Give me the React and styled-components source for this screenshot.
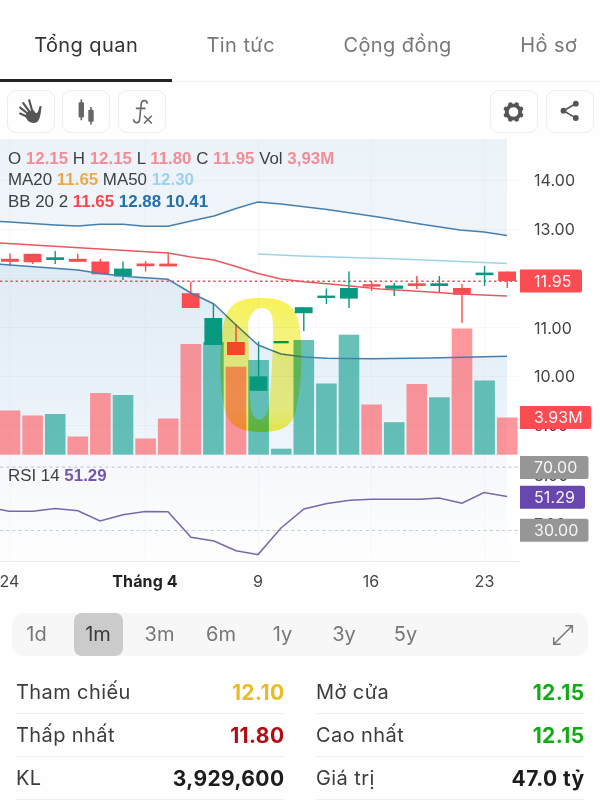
import React from "react";
import styled, { createGlobalStyle } from "styled-components";

const STEP = 22.6;
const VOLUME_BASE = 454.7;
const RED = "#fb4c52";
const GREEN = "#089981";
const UPPER_BAND =
  "0,221.5 10,222 32,223.5 55,225 78,226 100,224.3 123,224.3 145,226.3 168,226.3 191,221 214,216 236,208.5 258,202 281,204 327,209.5 380,217.3 420,224 460,230 484,232 507,235.5";
const LOWER_BAND =
  "0,264.3 78,270 100,273.5 130,276.7 168,279.3 191,293 214,304 236,325 258,345 281,354 304,357 327,358.2 371,358.8 430,358 507,356.2";

// [direction, body top, body bottom, high, low, volume top]
const candles = [
  ["down", 258.8, 261.8, 253.5, 266, 410.5],
  ["down", 253.8, 262.2, 253.8, 264, 415.5],
  ["up", 257.3, 260, 251, 264, 414],
  ["down", 258.8, 261.8, 253.8, 262, 436.5],
  ["down", 261.5, 274.3, 259, 274, 393],
  ["up", 268.6, 276.5, 261.5, 280, 395],
  ["down", 263.5, 266.2, 261, 271.5, 438.5],
  ["down", 263.6, 266.4, 252.5, 266, 418.5],
  ["down", 293.2, 308, 281.5, 308, 344],
  ["up", 318, 345, 304, 345, 342],
  ["down", 342, 355, 324, 355, 366.7],
  ["up", 376.4, 390.8, 341.5, 390.8, 360],
  ["up", 341, 343.3, 341, 343, 448.7],
  ["up", 307.2, 313.2, 307.2, 331, 340],
  ["up", 295.6, 298, 288.5, 304, 383.5],
  ["up", 288, 298.6, 271.5, 308, 334.7],
  ["down", 284.2, 286.6, 281, 291, 404.5],
  ["up", 285.5, 288.8, 283, 296, 422.2],
  ["down", 283.3, 286, 276, 289, 384],
  ["up", 283.3, 286, 276, 293, 397.3],
  ["down", 288, 294.8, 284, 323, 328.5],
  ["up", 272.6, 275.2, 266, 286, 380.5],
  ["down", 271.5, 281, 271.5, 288, 417.5],
];

const priceLabels = [
  ["14.00", 186.3],
  ["13.00", 235.2],
  ["11.00", 333.6],
  ["10.00", 382.4],
  ["9.00", 431.2],
  ["8.00", 480.5],
  ["7.00", 529.5],
];

const tags = [
  { text: "11.95", y: 269.6, width: 62, color: RED },
  { text: "3.93M", y: 406, width: 71.3, color: RED },
  { text: "70.00", y: 456, width: 68.5, color: "#969696" },
  { text: "51.29", y: 485.8, width: 65, color: "#6848b0" },
  { text: "30.00", y: 518.8, width: 68.5, color: "#969696" },
];

const tabs = ["Tổng quan", "Tin tức", "Cộng đồng", "Hồ sơ"];
const ranges = ["1d", "1m", "3m", "6m", "1y", "3y", "5y"];

const stats = [
  ["Tham chiếu", "12.10", "#e9bd20"],
  ["Mở cửa", "12.15", "#12ab15"],
  ["Thấp nhất", "11.80", "#b30d14"],
  ["Cao nhất", "12.15", "#12ab15"],
  ["KL", "3,929,600", "#1c1c1c"],
  ["Giá trị", "47.0 tỷ", "#1c1c1c"],
];

function HandIcon() {
  return (
    <svg width="28" height="28" viewBox="0 0 28 28">
      <g stroke="#555" strokeLinecap="round" fill="none">
        <path d="M15.5 15 12.2 3.2M13.5 16 6.2 6.2M12.5 18 3.2 10.6M12 20.5 3.2 16.6" strokeWidth="2.2" />
        <path d="M21.5 19 23.4 10.2" strokeWidth="2.4" />
      </g>
      <path
        fill="#555"
        d="M10.5 15 16.8 13.2C17.6 15 18.8 16.4 20 16L22 13 24 13.4C23.4 16 23.4 20.5 21.4 23.4C18.9 27 13.6 26.4 11 23.7L7.8 19.3Z"
      />
    </svg>
  );
}

function CandlesIcon() {
  return (
    <svg width="28" height="28" viewBox="0 0 28 28">
      <g fill="#666">
        <rect x="6.6" y="5.3" width="5.4" height="15.2" rx="1" />
        <rect x="16.3" y="12.8" width="5.4" height="12" rx="1" />
        <path d="M8.5 2.5h1.6v20.8H8.5zM18.2 10h1.6v17.5h-1.6z" />
      </g>
    </svg>
  );
}

function FunctionIcon() {
  return (
    <svg width="28" height="28" viewBox="0 0 28 28" fill="none" stroke="#696969" strokeWidth="1.6">
      <path d="M5.5 22.2C5.7 26.6 11.4 26.8 11.6 22.5L13.1 7.5C13.6 2.5 18.8 2.5 19.4 6.7M7.8 11.4h9.8" />
      <path d="M16 18.8l7.8 7.7M23.8 18.8 16 26.5" />
    </svg>
  );
}

function GearIcon() {
  return (
    <svg width="28" height="28" viewBox="0 0 28 28">
      <circle cx="13.5" cy="15" r="6.7" fill="none" stroke="#555" strokeWidth="3.8" />
      {[0, 1, 2, 3, 4, 5, 6, 7].map((n) => (
        <rect
          key={n}
          x="11.5"
          y="4.8"
          width="4"
          height="4"
          rx="1.2"
          fill="#555"
          transform={`rotate(${n * 45 + 22.5} 13.5 15)`}
        />
      ))}
    </svg>
  );
}

function ShareIcon() {
  return (
    <svg width="28" height="28" viewBox="0 0 28 28" fill="#555">
      <path d="M19.5 6.7 7.5 13.7 19.5 20.9" fill="none" stroke="#555" strokeWidth="1.6" />
      <circle cx="19.8" cy="6.7" r="2.9" />
      <circle cx="7.5" cy="13.7" r="2.9" />
      <circle cx="19.8" cy="21" r="2.9" />
    </svg>
  );
}

function ExpandIcon() {
  return (
    <svg width="22" height="22" viewBox="0 0 22 22" fill="none" stroke="#777" strokeWidth="1.5">
      <path d="M2 20 20 2M13.3 1.7H20.3V8.7M1.7 13.3V20.3H8.7" />
    </svg>
  );
}

function Chart() {
  return (
    <ChartSvg viewBox="0 139 600 461">
      <defs>
        <linearGradient id="upperFill" x1="0" y1="139" x2="0" y2="236" gradientUnits="userSpaceOnUse">
          <stop offset="0" stopColor="#ecf3f8" />
          <stop offset="1" stopColor="#f0f5fa" />
        </linearGradient>
        <linearGradient id="lowerFill" x1="0" y1="264" x2="0" y2="455" gradientUnits="userSpaceOnUse">
          <stop offset="0" stopColor="#dfebf4" />
          <stop offset="1" stopColor="#eff5fb" />
        </linearGradient>
        <linearGradient id="rsiFill" x1="0" y1="0" x2="0" y2="1">
          <stop offset="0" stopColor="#f4f7fb" />
          <stop offset="1" stopColor="#fefefe" />
        </linearGradient>
        <linearGradient id="highlightFill" x1="0" y1="0" x2="0" y2="1">
          <stop offset="0" stopColor="#f6ef20" stopOpacity="0.75" />
          <stop offset="0.25" stopColor="#efec20" stopOpacity="0.6" />
          <stop offset="0.8" stopColor="#efec20" stopOpacity="0.55" />
          <stop offset="1" stopColor="#f2ec10" stopOpacity="0.75" />
        </linearGradient>
      </defs>

      <polygon points={`0,139 ${UPPER_BAND} 507,139`} fill="url(#upperFill)" />
      <polygon points={`${LOWER_BAND} 507,455 0,455`} fill="url(#lowerFill)" />
      <rect x="0" y="455" width="507" height="106" fill="url(#rsiFill)" />

      <g stroke="#7890a8" strokeOpacity="0.06">
        {[10, 145.5, 258.5, 371.5, 484.5].map((x) => (
          <line key={x} x1={x} x2={x} y1="139" y2="561" />
        ))}
        {[180.5, 229.5, 278.5, 327.5, 376.5, 425.5].map((y) => (
          <line key={y} x1="0" x2="519" y1={y} y2={y} />
        ))}
      </g>

      {candles.map(([dir, , , , , top], i) => {
        const x = Math.max(0, 10 + i * STEP - 10.3);
        return (
          <rect
            key={i}
            x={x}
            y={top}
            width={i ? 20.6 : 20.3}
            height={VOLUME_BASE - top}
            fill={dir === "up" ? "#26a69a" : "#ff5258"}
            fillOpacity={dir === "up" ? 0.7 : 0.6}
          />
        );
      })}

      <line x1="0" x2="520" y1="281.2" y2="281.2" stroke="#dd555e" strokeWidth="1.4" strokeDasharray="2.4 2.8" />

      {candles.map(([dir, top, bottom, high, low], i) => {
        const x = 10 + i * STEP;
        const color = dir === "up" ? GREEN : RED;
        return (
          <g key={i} fill={color}>
            <rect x={x - 0.7} y={high} width="1.4" height={low - high} />
            <rect x={i === 12 ? x - 7.5 : x - 9} y={top} width={i === 12 ? 15 : 17.8} height={bottom - top} />
          </g>
        );
      })}

      <g fill="none" strokeWidth="1.5" strokeLinejoin="round">
        <polyline
          points="0,243 50,246 100,249 168,253 191,257 214,260 236,266.5 258,273.5 281,279 304,281.7 330,284 380,289 430,292 460,294 507,296"
          stroke="#e8595f"
        />
        <polyline points={UPPER_BAND} stroke="#457fb0" />
        <polyline points={LOWER_BAND} stroke="#457fb0" />
        <polyline points="258,254 300,256 400,259 460,261.5 507,263.5" stroke="#9fd3e6" />
      </g>

      <Highlight
        fill="url(#highlightFill)"
        fillRule="evenodd"
        d="M259 298C282 298 295 303 299 324C303 350 302 383 296 410C293 425 283 432 262 432C242 432 230 427 225 411C219 386 219 344 224 322C228 304 240 298 259 298ZM262 308C254 308 249 315 248 326C250 352 248 385 251 409C254 423 265 423 268 409C272 384 273 349 273 326C273 314 270 308 262 308Z"
      />

      <g stroke="#c9c9cf" strokeDasharray="3 3.2" strokeWidth="1.2">
        <line x1="0" x2="520" y1="467.2" y2="467.2" />
        <line x1="0" x2="520" y1="530.5" y2="530.5" />
      </g>
      <polyline
        points="0,509.5 9,511.3 33,511.3 55,508.5 78,510.8 100,521 123,514.8 145,511.5 168,511.8 191,537.3 214,541 236,550.7 258,554.6 281,528 304,509 327,503.5 350,500.3 371,499.2 420,499.2 439,498 462,503.2 484,492.5 507,496.5"
        fill="none"
        stroke="#7768ae"
        strokeWidth="1.5"
      />
      <line x1="0" x2="520" y1="561.5" y2="561.5" stroke="#ececee" />

      {priceLabels.map(([text, y]) => (
        <AxisText key={text} x="534" y={y}>
          {text}
        </AxisText>
      ))}
      {tags.map((tag) => (
        <g key={tag.text}>
          <path
            d={`M520 ${tag.y}h${tag.width - 2.5}q2.5 0 2.5 2.5v18q0 2.5 -2.5 2.5h${2.5 - tag.width}z`}
            fill={tag.color}
          />
          <AxisText x="534" y={tag.y + 17.2} $light>
            {tag.text}
          </AxisText>
        </g>
      ))}

      <AxisText x="-0.5" y="587">24</AxisText>
      <AxisText x="145" y="587" textAnchor="middle" $bold>Tháng 4</AxisText>
      <AxisText x="258" y="587" textAnchor="middle">9</AxisText>
      <AxisText x="371" y="587" textAnchor="middle">16</AxisText>
      <AxisText x="484.5" y="587" textAnchor="middle">23</AxisText>
    </ChartSvg>
  );
}

export default function App() {
  return (
    <Page>
      <GlobalStyle />
      <TabBar>
        {tabs.map((tab, i) => (
          <Tab key={tab} $active={i === 0}>
            {tab}
          </Tab>
        ))}
      </TabBar>
      <Toolbar>
        <ToolGroup>
          <ToolButton><HandIcon /></ToolButton>
          <ToolButton><CandlesIcon /></ToolButton>
          <ToolButton><FunctionIcon /></ToolButton>
        </ToolGroup>
        <ToolGroup>
          <ToolButton><GearIcon /></ToolButton>
          <ToolButton><ShareIcon /></ToolButton>
        </ToolGroup>
      </Toolbar>
      <ChartArea>
        <Chart />
        <Legend $top={8.6}>
          <div>
            O <Value $color="#f08d96">12.15</Value> H <Value $color="#f08d96">12.15</Value> L{" "}
            <Value $color="#f08d96">11.80</Value> C <Value $color="#f08d96">11.95</Value> Vol{" "}
            <Value $color="#f08d96">3,93M</Value>
          </div>
          <div>
            MA20 <Value $color="#eba94c">11.65</Value> MA50 <Value $color="#9bd2ee">12.30</Value>
          </div>
          <div>
            BB 20 2 <Value $color="#f5474f">11.65</Value> <Value $color="#2470ac">12.88</Value>{" "}
            <Value $color="#2470ac">10.41</Value>
          </div>
        </Legend>
        <Legend $top={325.6}>
          <div>
            RSI 14 <Value $color="#7355b2">51.29</Value>
          </div>
        </Legend>
      </ChartArea>
      <RangeBar>
        <RangeList>
          {ranges.map((range) => (
            <RangeButton key={range} $active={range === "1m"}>
              {range}
            </RangeButton>
          ))}
        </RangeList>
        <ExpandIcon />
      </RangeBar>
      <StatsGrid>
        {stats.map(([label, value, color]) => (
          <StatRow key={label}>
            <span>{label}</span>
            <StatValue $color={color}>{value}</StatValue>
          </StatRow>
        ))}
      </StatsGrid>
    </Page>
  );
}

const GlobalStyle = createGlobalStyle`
  * {
    box-sizing: border-box;
  }

  body {
    margin: 0;
    background: #fefefe;
    overflow: hidden;
  }
`;

const Page = styled.div`
  width: 600px;
  height: 800px;
  overflow: hidden;
  background: #fefefe;
  font-family: Inter, "Liberation Sans", sans-serif;
  color: #3c3c3c;
`;

const TabBar = styled.nav`
  display: flex;
  height: 82px;
  border-bottom: 1px solid #f2f2f2;
`;

const Tab = styled.button`
  all: unset;
  box-sizing: border-box;
  flex-shrink: 0;
  height: 82px;
  padding: 11px 34.2px 0;
  font-size: 20px;
  letter-spacing: 0.42px;
  color: ${(props) => (props.$active ? "#333" : "#777")};
  border-bottom: 3px solid ${(props) => (props.$active ? "#222" : "transparent")};
`;

const Toolbar = styled.div`
  display: flex;
  justify-content: space-between;
  height: 57px;
  padding: 7.5px 6.5px 0;
`;

const ToolGroup = styled.div`
  display: flex;
  gap: 7.5px;
`;

const ToolButton = styled.button`
  all: unset;
  box-sizing: border-box;
  display: flex;
  align-items: center;
  justify-content: center;
  width: 48px;
  height: 43px;
  border: 1.5px solid #ededed;
  border-radius: 9px;
`;

const ChartArea = styled.div`
  position: relative;
  height: 461px;
`;

const ChartSvg = styled.svg`
  display: block;
  width: 600px;
  height: 461px;
`;

const Highlight = styled.path`
  mix-blend-mode: multiply;
`;

const AxisText = styled.text`
  font-family: Inter, sans-serif;
  font-size: 16px;
  font-weight: ${(props) => (props.$bold ? 700 : 400)};
  letter-spacing: 0.1px;
  fill: ${(props) => (props.$light ? "#f7f3f6" : props.$bold ? "#222" : "#444")};
`;

const Legend = styled.div`
  position: absolute;
  left: 8px;
  top: ${(props) => props.$top}px;
  font-family: "Liberation Sans", Arial, sans-serif;
  font-size: 16.9px;
  line-height: 21.6px;
  white-space: nowrap;
  color: #3e4043;
`;

const Value = styled.b`
  color: ${(props) => props.$color};
`;

const RangeBar = styled.div`
  display: flex;
  align-items: center;
  justify-content: space-between;
  height: 43px;
  margin: 13px 12px 0;
  padding-right: 14px;
  border-radius: 12px;
  background: #f7f7f7;
`;

const RangeList = styled.div`
  display: flex;
  gap: 12.5px;
`;

const RangeButton = styled.button`
  all: unset;
  width: 49px;
  line-height: 43px;
  border-radius: 8px;
  text-align: center;
  font-size: 20px;
  color: ${(props) => (props.$active ? "#3a3a3a" : "#777")};
  background: ${(props) => (props.$active ? "#cbcbcb" : "transparent")};
`;

const StatsGrid = styled.div`
  display: grid;
  grid-template-columns: 268px 268px;
  column-gap: 32px;
  margin: 15px 16px 0;
`;

const StatRow = styled.div`
  display: flex;
  align-items: center;
  justify-content: space-between;
  height: 43px;
  border-bottom: 1px solid #ededed;
  font-size: 20px;
  letter-spacing: 0.4px;
`;

const StatValue = styled.span`
  margin-right: -0.5px;
  font-size: 21px;
  font-weight: 700;
  color: ${(props) => props.$color};
`;
